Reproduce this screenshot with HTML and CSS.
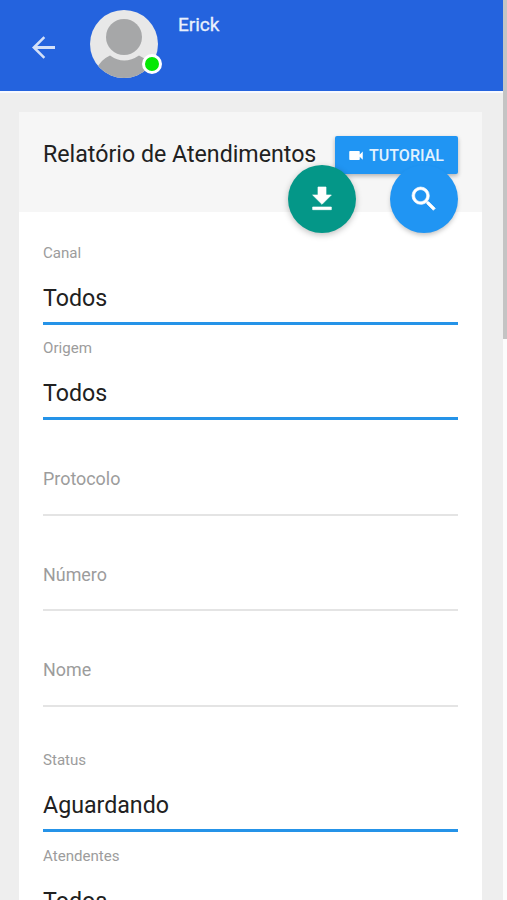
FILE: index.html
```html
<!DOCTYPE html>
<html lang="pt-BR">
<head>
<meta charset="utf-8">
<meta name="viewport" content="width=device-width, initial-scale=1">
<title>Relatório de Atendimentos</title>
<link rel="stylesheet" href="styles.css">
</head>
<body>
<div class="app">
  <div class="screen">
    <header class="topbar">
      <svg class="back" viewBox="0 0 24 24"><path d="M24 10.500v3H5.500l8.300 8.300L12 23.800 0 12 12 .2l1.800 2L5.500 10.500z"/></svg>
      <div class="avatar">
        <svg viewBox="0 0 68 68">
          <defs><clipPath id="round"><circle cx="34" cy="34" r="34"/></clipPath></defs>
          <g clip-path="url(#round)">
            <rect width="68" height="68" fill="#e8e8e8"/>
            <path d="M6 60Q10 50 20 45.500Q34 55.500 49 45.500Q59 50 64 60V68H6z" fill="#a6a7a8"/>
            <circle cx="34" cy="27" r="18" fill="#a6a7a8"/>
          </g>
        </svg>
        <span class="status"></span>
      </div>
      <span class="user">Erick</span>
    </header>
    <main class="card">
      <div class="card-head">
        <h1 class="title">Relatório de Atendimentos</h1>
        <button class="tutorial"><svg viewBox="3 6 18 12"><path d="M17 10.500V7c0-.55-.45-1-1-1H4c-.55 0-1 .45-1 1v10c0 .55.45 1 1 1h12c.55 0 1-.45 1-1v-3.500l4 4v-11z"/></svg>TUTORIAL</button>
        <div class="actions">
          <button class="fab download"><svg viewBox="0 0 24 24"><path d="M19 9h-4V3H9v6H5l7 7zM5 18v2h14v-2z"/></svg></button>
          <button class="fab search"><svg viewBox="0 0 24 24"><path d="M15.500 14h-.79l-.28-.27A6.470 6.470 0 0 0 16 9.500 6.500 6.500 0 1 0 9.500 16c1.610 0 3.090-.59 4.230-1.570l.27.28v.79l5 4.990L20.490 19zm-6 0C7.010 14 5 11.990 5 9.500S7.010 5 9.500 5 14 7.010 14 9.500 11.990 14 9.500 14z"/></svg></button>
        </div>
      </div>
      <form class="fields">
        <div class="field select"><label>Canal</label><span class="value">Todos</span></div>
        <div class="field select"><label>Origem</label><span class="value">Todos</span></div>
        <div class="field text"><label>Protocolo</label></div>
        <div class="field text"><label>Número</label></div>
        <div class="field text last"><label>Nome</label></div>
        <div class="field select"><label>Status</label><span class="value">Aguardando</span></div>
        <div class="field select"><label>Atendentes</label><span class="value">Todos</span></div>
      </form>
    </main>
  </div>
  <div class="scrollbar"><div class="thumb"></div></div>
</div>
</body>
</html>
```
FILE: styles.css
```css
* { box-sizing: border-box; }
body {
  margin: 0;
  height: 900px;
  overflow: hidden;
  font-family: Roboto, sans-serif;
  color: #212121;
  background: #eee;
}
.app { display: flex; height: 900px; overflow: hidden; }
.screen { flex: 1; min-width: 0; height: 900px; overflow: hidden; }
.scrollbar { width: 4px; background: #fcfcfc; }
.thumb { height: 339px; background: #c4c4c4; }
.topbar {
  display: flex;
  align-items: flex-start;
  height: 93px;
  padding: 10px 0 0 32px;
  background: #2463de;
  border-bottom: 2px solid #f7f9ff;
}
.back { width: 23px; height: 23px; margin-top: 26px; fill: #d3e0f8; }
.avatar { position: relative; width: 68px; height: 68px; margin-left: 35px; }
.avatar svg { display: block; width: 68px; height: 68px; }
.status {
  position: absolute;
  left: 52px;
  top: 44px;
  width: 20px;
  height: 20px;
  border: 3px solid #fff;
  border-radius: 50%;
  background: #04e804;
}
.user { margin: 3px 0 0 20px; font-size: 19px; line-height: 24px; color: #e9f0fc; -webkit-text-stroke: .3px #e9f0fc; }
.card { margin: 19px 21px 0 19px; background: #fff; }
.card-head {
  position: relative;
  display: flex;
  justify-content: space-between;
  align-items: flex-start;
  height: 100px;
  padding: 24px 24px 0;
  background: #f6f6f6;
}
.title { margin: 3px 0 0; font-size: 23.200px; line-height: 30px; font-weight: 400; white-space: nowrap; }
button { border: 0; padding: 0; font-family: inherit; color: #fff; background: #2095f3; }
.tutorial {
  display: flex;
  align-items: center;
  justify-content: center;
  gap: 6px;
  width: 123px;
  height: 38px;
  border-radius: 2px;
  box-shadow: 0 2px 4px rgba(0, 0, 0, .28);
  font-size: 16px;
  font-weight: 500;
  color: #e2f2fe;
}
.tutorial svg { width: 14px; height: 9px; fill: #fff; }
.actions { position: absolute; right: 24.500px; top: 53px; display: flex; gap: 34px; }
.fab {
  display: flex;
  align-items: center;
  justify-content: center;
  width: 68px;
  height: 68px;
  border-radius: 50%;
  box-shadow: 0 2px 6px rgba(0, 0, 0, .25);
}
.fab svg { width: 32px; height: 32px; fill: #fff; stroke: #fff; stroke-width: .5; }
.download { background: #049788; }
.search { box-shadow: 0 3px 5px -1px rgba(0, 0, 0, .25); }
.fields { padding: 17px 24px 0; }
.field { display: flex; flex-direction: column; height: 95.500px; }
.field label { color: #9c9c9c; }
.select { padding-top: 13.500px; border-bottom: 3px solid #2593e8; }
.select label { font-size: 15.100px; line-height: 20px; }
.value { margin-top: 15px; padding-top: 5px; font-size: 23.200px; line-height: 30px; }
.text { padding-top: 47px; border-bottom: 2px solid #e4e4e4; }
.text label { font-size: 17.900px; line-height: 24px; }
.last { margin-bottom: 30.400px; }
```
